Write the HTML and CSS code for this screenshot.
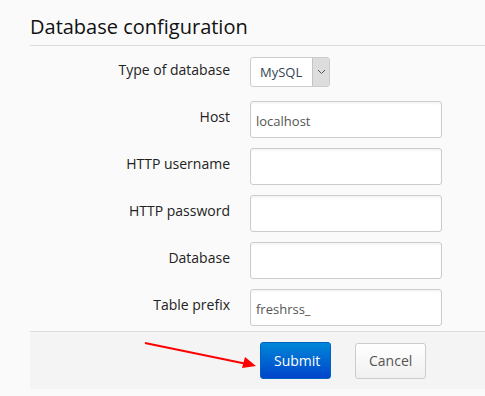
FILE: index.html
```html
<!DOCTYPE html>
<html lang="en">
<head>
    <meta charset="UTF-8">
    <meta name="viewport" content="width=device-width, initial-scale=1.0">
    <title>Database configuration</title>
    <link rel="stylesheet" href="styles.css">
</head>
<body>
    <form class="config">
        <h1>Database configuration</h1>

        <div class="row row-select">
            <label>Type of database</label>
            <div class="select">
                <span class="select-value">MySQL</span>
                <span class="select-arrow">
                    <svg width="9" height="6" viewBox="0 0 9 6"><path d="M1 1 L4.5 4.5 L8 1" fill="none" stroke="#555" stroke-width="1"/></svg>
                </span>
            </div>
        </div>
        <div class="row">
            <label>Host</label>
            <input class="field" type="text" value="localhost">
        </div>
        <div class="row">
            <label>HTTP username</label>
            <input class="field" type="text">
        </div>
        <div class="row">
            <label>HTTP password</label>
            <input class="field" type="password">
        </div>
        <div class="row">
            <label>Database</label>
            <input class="field" type="text">
        </div>
        <div class="row">
            <label>Table prefix</label>
            <input class="field" type="text" value="freshrss_">
        </div>

        <div class="actions">
            <button type="button" class="btn btn-primary">Submit</button>
            <button type="button" class="btn">Cancel</button>
            <!-- annotation arrow -->
            <svg class="arrow" width="120" height="30" viewBox="0 0 120 30">
                <line x1="2" y1="2" x2="104" y2="23" stroke="#f00" stroke-width="2"/>
                <polygon points="113,25 99,27 102,16" fill="#f00"/>
            </svg>
        </div>
    </form>
</body>
</html>
```

FILE: styles.css
```css
body {
    margin: 0;
    background-color: #fafafa;
    font-family: "Open Sans", sans-serif;
    color: #222222;
    overflow: hidden;
}

.config {
    margin-left: 30px;
    width: 470px;
}

h1 {
    margin: 0;
    padding-top: 13px;
    height: 32px;
    font-size: 20px;
    font-weight: normal;
    line-height: 28px;
    color: #111111;
    border-bottom: 1px solid #dddddd;
}

.row {
    display: flex;
    align-items: center;
    margin-top: 10px;
}

.row-select {
    margin-top: 11px;
    margin-bottom: 14px;
}

.row label {
    width: 200px;
    margin-right: 20px;
    text-align: right;
    font-size: 14px;
    color: #222222;
    padding-bottom: 6px;
}

.field {
    box-sizing: border-box;
    width: 192px;
    height: 37px;
    margin: 0;
    padding: 2px 5px 0;
    border: 1px solid #cccccc;
    border-radius: 3px;
    background-color: #ffffff;
    font-family: "Open Sans", sans-serif;
    font-size: 13px;
    color: #555555;
    box-shadow: inset 0 2px 2px rgba(0, 0, 0, 0.04);
}

.select {
    box-sizing: border-box;
    display: flex;
    width: 80px;
    height: 30px;
    border: 1px solid #cccccc;
    border-radius: 3px;
    background-color: #ffffff;
    overflow: hidden;
}

.select-value {
    flex: 1;
    padding-left: 9px;
    line-height: 28px;
    font-size: 13px;
    color: #334455;
}

.select-arrow {
    width: 16px;
    display: flex;
    align-items: center;
    justify-content: center;
    background-color: #dddddd;
    border-left: 1px solid #c4c4c4;
}

.actions {
    position: relative;
    display: flex;
    align-items: center;
    gap: 24px;
    margin-top: 5px;
    height: 57px;
    padding-left: 230px;
    background-color: #f4f4f4;
    border-top: 1px solid #dddddd;
}

.btn {
    box-sizing: border-box;
    height: 36px;
    padding: 0 13px;
    border: 1px solid #cccccc;
    border-radius: 3px;
    background: linear-gradient(#ffffff, #f0f0f0);
    font-family: "Open Sans", sans-serif;
    font-size: 14px;
    color: #555555;
}

.btn-primary {
    width: 71px;
    height: 37px;
    border-color: #0062be;
    background: linear-gradient(#0087d8, #0044cb);
    color: #ffffff;
}

.arrow {
    position: absolute;
    left: 113px;
    top: 9px;
}
```
